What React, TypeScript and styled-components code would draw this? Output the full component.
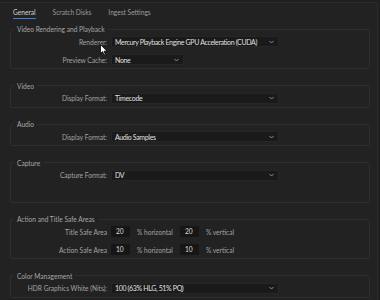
import React from "react";
import styled, { createGlobalStyle } from "styled-components";

const Global = createGlobalStyle`
  html, body { margin: 0; padding: 0; background: #202020; }
  body { font-family: "Lato", "Noto Sans", sans-serif; }
  * { box-sizing: border-box; }
`;

const Panel = styled.div`
  position: relative;
  width: 378px;
  height: 298px;
  margin-top: 2px;
  border-top: 1px solid #2b2b2b;
  border-right: 1px solid #2b2b2b;
  background: #222222;
  overflow: hidden;
`;

const TabBar = styled.div`
  display: flex;
  gap: 17px;
  padding: 4px 0 0 13px;
  height: 18px;
`;

const Tab = styled.div<{ $active?: boolean }>`
  font-size: 6.6px;
  line-height: 10px;
  height: 12px;
  color: ${(p) => (p.$active ? "#d2d2d2" : "#9c9c9c")};
  border-bottom: 1px solid ${(p) => (p.$active ? "#3f7fd6" : "transparent")};
`;

const Groups = styled.div`
  display: flex;
  flex-direction: column;
  gap: 12.5px;
  padding: 4px 7px 0 10px;
`;

const Group = styled.fieldset`
  margin: 0;
  border: 1px solid #2e2e2e;
  border-radius: 2px;
  padding: 3px 0 3px 0;
  display: flex;
  flex-direction: column;
  gap: 7px;
  min-width: 0;
`;

const Legend = styled.legend`
  font-size: 6.6px;
  line-height: 8px;
  color: #a6a6a6;
  margin-left: 3px;
  padding: 0 3px;
`;

const Row = styled.div`
  display: grid;
  grid-template-columns: 96px auto;
  column-gap: 4px;
  align-items: center;
  height: 11px;
`;

const Label = styled.div`
  font-size: 6.6px;
  color: #a3a3a3;
  text-align: right;
  white-space: nowrap;
`;

const Select = styled.div<{ $w: number }>`
  width: ${(p) => p.$w}px;
  height: 11px;
  background: #1a1a1a;
  border: 1px solid #262626;
  border-radius: 1px;
  display: flex;
  align-items: center;
  justify-content: space-between;
  padding: 0 4px 0 3px;
  font-size: 7px;
  letter-spacing: -0.35px;
  color: #e0e0e0;
  white-space: nowrap;
`;

const SelectText = styled.span`
  flex: none;
`;

const Chevron = styled.svg`
  width: 5px;
  height: 4px;
  flex: none;
  margin-left: 2px;
`;

const Inline = styled.div`
  display: flex;
  align-items: center;
`;

const NumInput = styled.div`
  width: 19px;
  height: 11px;
  background: #161616;
  border-radius: 1px;
  font-size: 6.6px;
  color: #dedede;
  padding-left: 5px;
  line-height: 11px;
`;

const Unit = styled.div<{ $w: number }>`
  width: ${(p) => p.$w}px;
  padding-left: 7px;
  font-size: 6.6px;
  color: #a3a3a3;
  white-space: nowrap;
`;

const Cursor = styled.svg`
  position: absolute;
  left: 100px;
  top: 41px;
  width: 8px;
  height: 12px;
`;

const Drop = ({ w, children }: { w: number; children: React.ReactNode }) => (
  <Select $w={w}>
    <SelectText>{children}</SelectText>
    <Chevron viewBox="0 0 5 4">
      <path d="M0.5 1 L2.5 3 L4.5 1" fill="none" stroke="#9a9a9a" strokeWidth="0.9" />
    </Chevron>
  </Select>
);

export default function App() {
  return (
    <>
      <Global />
      <Panel>
        <TabBar>
          <Tab $active>General</Tab>
          <Tab>Scratch Disks</Tab>
          <Tab>Ingest Settings</Tab>
        </TabBar>
        <Groups>
          <Group>
            <Legend>Video Rendering and Playback</Legend>
            <Row>
              <Label>Renderer:</Label>
              <Drop w={168}>Mercury Playback Engine GPU Acceleration (CUDA)</Drop>
            </Row>
            <Row>
              <Label>Preview Cache:</Label>
              <Drop w={73}>None</Drop>
            </Row>
          </Group>
          <Group>
            <Legend>Video</Legend>
            <Row>
              <Label>Display Format:</Label>
              <Drop w={168}>Timecode</Drop>
            </Row>
          </Group>
          <Group>
            <Legend>Audio</Legend>
            <Row>
              <Label>Display Format:</Label>
              <Drop w={168}>Audio Samples</Drop>
            </Row>
          </Group>
          <Group>
            <Legend>Capture</Legend>
            <Row>
              <Label>Capture Format:</Label>
              <Drop w={168}>DV</Drop>
            </Row>
            <Row />
          </Group>
          <Group>
            <Legend>Action and Title Safe Areas</Legend>
            <Row>
              <Label>Title Safe Area</Label>
              <Inline>
                <NumInput>20</NumInput>
                <Unit $w={50}>% horizontal</Unit>
                <NumInput>20</NumInput>
                <Unit $w={50}>% vertical</Unit>
              </Inline>
            </Row>
            <Row>
              <Label>Action Safe Area</Label>
              <Inline>
                <NumInput>10</NumInput>
                <Unit $w={50}>% horizontal</Unit>
                <NumInput>10</NumInput>
                <Unit $w={50}>% vertical</Unit>
              </Inline>
            </Row>
          </Group>
          <Group>
            <Legend>Color Management</Legend>
            <Row>
              <Label>HDR Graphics White (Nits):</Label>
              <Drop w={168}>100 (63% HLG, 51% PQ)</Drop>
            </Row>
          </Group>
        </Groups>
        <Cursor viewBox="0 0 8 12">
          <path d="M0.5 0.5 L0.5 9.5 L2.6 7.6 L4 11 L5.4 10.4 L4 7.2 L7 7.2 Z" fill="#ffffff" stroke="#000" strokeWidth="0.8" />
        </Cursor>
      </Panel>
    </>
  );
}
